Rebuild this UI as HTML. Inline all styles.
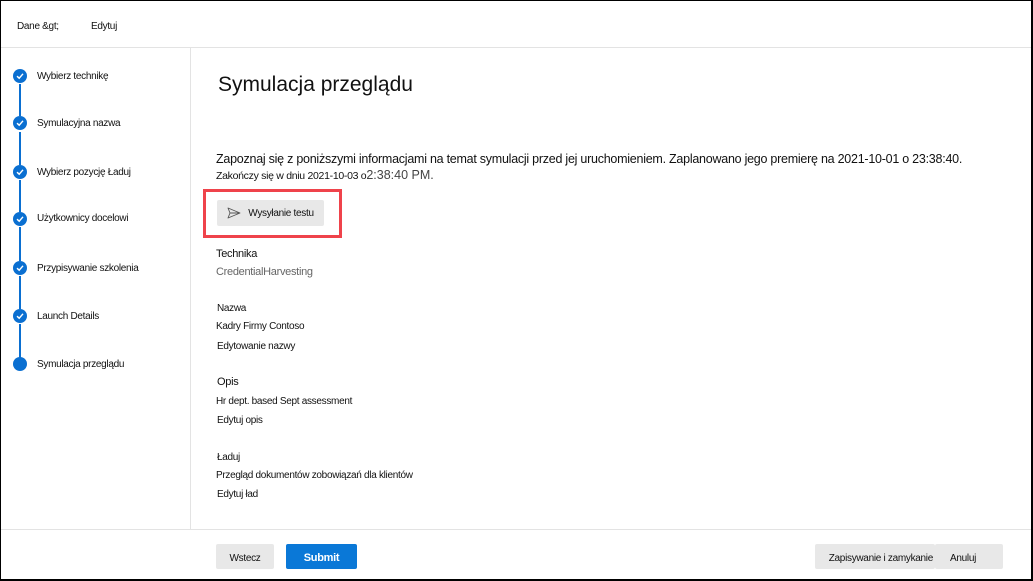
<!DOCTYPE html>
<html><head><meta charset="utf-8">
<style>
*{margin:0;padding:0;box-sizing:border-box}
html,body{width:1033px;height:581px;overflow:hidden;background:#fff}
body{position:relative;font-family:"Liberation Sans",sans-serif;color:#111;font-size:10px;letter-spacing:-0.3px}
.frame{position:absolute;left:0;top:0;width:1033px;height:581px;border:1px solid #000;border-right-width:2px;border-bottom-width:2px}
.t{position:absolute;white-space:nowrap}
.hl{position:absolute;background:#e3e3e3}
.dot{position:absolute;left:13px;width:14px;height:14px;border-radius:50%;background:#0a6fd1}
.dot svg{position:absolute;left:3px;top:3px}
.line{position:absolute;left:19px;width:2px;background:#0a6fd1}
.btn{position:absolute;background:#e8e8e8;border-radius:2px;font-size:10px;display:flex;align-items:center;justify-content:center}
</style></head><body>
<div class="frame"></div>
<div class="t" style="left:17px;top:21px">Dane &amp;gt;</div>
<div class="t" style="left:91px;top:21px">Edytuj</div>
<div class="hl" style="left:1px;top:47px;width:1030px;height:1px"></div>
<div class="hl" style="left:190px;top:48px;width:1px;height:481px"></div>
<div class="hl" style="left:1px;top:529px;width:1030px;height:1px"></div>

<div class="line" style="top:84px;height:32px"></div>
<div class="line" style="top:132px;height:33px"></div>
<div class="line" style="top:180px;height:32px"></div>
<div class="line" style="top:227px;height:34px"></div>
<div class="line" style="top:276px;height:33px"></div>
<div class="line" style="top:324px;height:34px"></div>

<div class="dot" style="top:69px"><svg width="8" height="8" viewBox="0 0 8 8"><path d="M1 4.2 L3.2 6.2 L7 1.8" stroke="#fff" stroke-width="1.4" fill="none"/></svg></div>
<div class="dot" style="top:116px"><svg width="8" height="8" viewBox="0 0 8 8"><path d="M1 4.2 L3.2 6.2 L7 1.8" stroke="#fff" stroke-width="1.4" fill="none"/></svg></div>
<div class="dot" style="top:165px"><svg width="8" height="8" viewBox="0 0 8 8"><path d="M1 4.2 L3.2 6.2 L7 1.8" stroke="#fff" stroke-width="1.4" fill="none"/></svg></div>
<div class="dot" style="top:212px"><svg width="8" height="8" viewBox="0 0 8 8"><path d="M1 4.2 L3.2 6.2 L7 1.8" stroke="#fff" stroke-width="1.4" fill="none"/></svg></div>
<div class="dot" style="top:261px"><svg width="8" height="8" viewBox="0 0 8 8"><path d="M1 4.2 L3.2 6.2 L7 1.8" stroke="#fff" stroke-width="1.4" fill="none"/></svg></div>
<div class="dot" style="top:309px"><svg width="8" height="8" viewBox="0 0 8 8"><path d="M1 4.2 L3.2 6.2 L7 1.8" stroke="#fff" stroke-width="1.4" fill="none"/></svg></div>
<div class="dot" style="top:357px"></div>

<div class="t" style="left:37px;top:71px">Wybierz technikę</div>
<div class="t" style="left:37px;top:118px">Symulacyjna nazwa</div>
<div class="t" style="left:37px;top:167px">Wybierz pozycję Ładuj</div>
<div class="t" style="left:37px;top:213px">Użytkownicy docelowi</div>
<div class="t" style="left:37px;top:263px">Przypisywanie szkolenia</div>
<div class="t" style="left:37px;top:311px">Launch Details</div>
<div class="t" style="left:37px;top:359px">Symulacja przeglądu</div>

<div class="t" style="left:218px;top:73px;font-size:21px;color:#111;letter-spacing:0">Symulacja przeglądu</div>
<div class="t" style="left:216px;top:152px;font-size:12.5px;letter-spacing:-0.25px">Zapoznaj się z poniższymi informacjami na temat symulacji przed jej uruchomieniem. Zaplanowano jego premierę na 2021-10-01 o 23:38:40.</div>
<div class="t" style="left:216px;top:168px;font-size:10.5px">Zakończy się w dniu 2021-10-03 o<span style="font-size:12.5px;color:#444;letter-spacing:0">2:38:40 PM.</span></div>

<div style="position:absolute;left:203px;top:189px;width:139px;height:49px;border:3px solid #ef434b"></div>
<div class="btn" style="left:217px;top:200px;width:107px;height:26px">
<svg width="14" height="12" viewBox="0 0 14 12" style="margin-right:7px"><path d="M1 1 L13 6 L1 11 L3 6 Z M3 6 H13" stroke="#555" stroke-width="0.9" fill="none" stroke-linejoin="round"/></svg>Wysyłanie testu</div>

<div class="t" style="left:216px;top:248px;font-size:11px">Technika</div>
<div class="t" style="left:216px;top:266px;font-size:11px;color:#666">CredentialHarvesting</div>

<div class="t" style="left:217px;top:303px">Nazwa</div>
<div class="t" style="left:216px;top:321px">Kadry Firmy Contoso</div>
<div class="t" style="left:217px;top:341px">Edytowanie nazwy</div>

<div class="t" style="left:217px;top:376px;font-size:11px">Opis</div>
<div class="t" style="left:216px;top:396px">Hr dept. based Sept assessment</div>
<div class="t" style="left:217px;top:415px">Edytuj opis</div>

<div class="t" style="left:217px;top:452px">Ładuj</div>
<div class="t" style="left:216px;top:470px">Przegląd dokumentów zobowiązań dla klientów</div>
<div class="t" style="left:217px;top:489px">Edytuj ład</div>

<div class="btn" style="left:216px;top:544px;width:58px;height:25px;padding-top:4px">Wstecz</div>
<div class="btn" style="left:286px;top:544px;width:71px;height:25px;background:#0a78d7;color:#fff;font-weight:bold;font-size:11px;padding-top:2px">Submit</div>
<div class="btn" style="left:815px;top:544px;width:120px;height:25px;justify-content:flex-end;padding-right:2px;padding-top:4px">Zapisywanie i zamykanie</div>
<div class="btn" style="left:935px;top:544px;width:68px;height:25px;justify-content:flex-start;padding-left:15px;padding-top:4px">Anuluj</div>
</body></html>
